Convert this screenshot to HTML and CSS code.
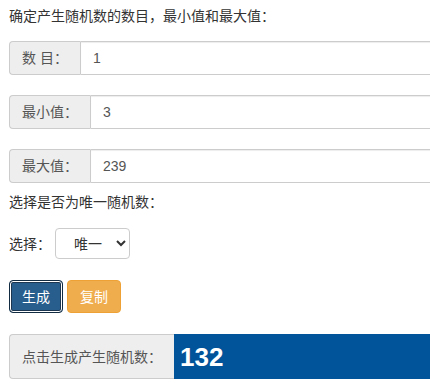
FILE: index.html
```html
<!DOCTYPE html>
<html lang="zh-CN">
<head>
    <meta charset="UTF-8">
    <title>随机数生成器</title>
    <link rel="stylesheet" href="styles.css">
</head>
<body>
    <div class="container">
        <p class="tip">确定产生随机数的数目，最小值和最大值：</p>

        <div class="input-group first">
            <span class="addon">数 目：</span>
            <input class="form-control" id="count" value="1">
        </div>

        <div class="input-group">
            <span class="addon">最小值：</span>
            <input class="form-control" id="min" value="3">
        </div>

        <div class="input-group">
            <span class="addon">最大值：</span>
            <input class="form-control" id="max" value="239">
        </div>

        <p class="tip sub">选择是否为唯一随机数：</p>

        <div class="select-row">
            <label>选择：</label>
            <select id="unique">
                <option value="1">唯一</option>
                <option value="0">不唯一</option>
            </select>
        </div>

        <div class="buttons">
            <button class="btn btn-primary">生成</button>
            <button class="btn btn-warning">复制</button>
        </div>

        <div class="input-group result">
            <span class="addon">点击生成产生随机数：</span>
            <div class="output">132</div>
        </div>
    </div>
</body>
</html>
```

FILE: styles.css
```css
html, body {
    margin: 0;
    overflow: hidden;
}
body {
    font-family: "Liberation Sans", "Noto Sans CJK SC", sans-serif;
    font-size: 14px;
    line-height: 20px;
    color: #333;
    background: #fff;
}
.container {
    padding: 6px 0 0 9px;
    width: 480px;
}
.tip {
    margin: 0;
}
.tip.sub {
    margin-top: 9px;
}
.input-group {
    display: flex;
    height: 34px;
    margin-top: 20px;
}
.input-group.first {
    margin-top: 15px;
}
.addon {
    display: flex;
    align-items: center;
    padding: 0 12px;
    background: #eee;
    color: #555;
    border: 1px solid #ccc;
    border-right: none;
    border-radius: 4px 0 0 4px;
    white-space: nowrap;
}
.form-control {
    flex: 1;
    margin: 0;
    padding: 0 12px;
    border: 1px solid #ccc;
    border-radius: 0 4px 4px 0;
    font: inherit;
    color: #555;
    box-shadow: inset 0 1px 1px rgba(0,0,0,0.075);
}
.select-row {
    display: flex;
    align-items: center;
    margin-top: 16px;
    height: 31px;
}
.select-row label {
    margin-right: 4px;
}
.select-row select {
    width: 75px;
    height: 31px;
    padding: 0 0 0 14px;
    border: 1px solid #ccc;
    border-radius: 4px;
    background: #fff;
    font: inherit;
    color: #333;
}
.buttons {
    display: flex;
    gap: 4px;
    margin-top: 21px;
}
.btn {
    height: 33px;
    width: 54px;
    padding: 0;
    border-radius: 4px;
    font: inherit;
    color: #fff;
    cursor: pointer;
}
.btn-primary {
    background: #285e8e;
    border: 1px solid #122b40;
    box-shadow: 0 0 0 1px #fff inset, 0 0 0 2px #1c3550 inset;
}
.btn-warning {
    background: #f0ad4e;
    border: 1px solid #eea236;
}
.input-group.result {
    height: 45px;
    margin-top: 21px;
}
.output {
    flex: 1;
    display: flex;
    align-items: center;
    padding-left: 6px;
    background: #01539a;
    color: #fff;
    font-size: 26px;
    font-weight: bold;
    border-radius: 0 4px 4px 0;
}
```
